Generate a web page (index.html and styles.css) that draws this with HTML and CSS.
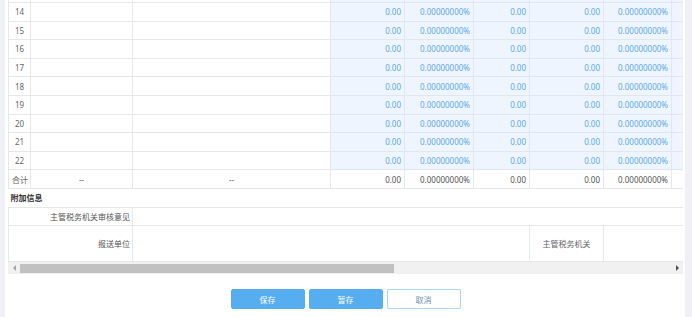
FILE: index.html
```html
<!DOCTYPE html>
<html lang="zh-CN">

<head>
    <meta charset="UTF-8" />
    <meta name="viewport" content="width=device-width, initial-scale=1" />
    <title>申报表</title>
    <link rel="stylesheet" href="styles.css">
</head>

<body>
    <div class="panel">
        <div class="sheetwrap">
            <table class="sheet">
                <colgroup>
                    <col class="w22"><col class="w102"><col class="w198">
                    <col class="w74"><col class="w69"><col class="w56"><col class="w74"><col class="w68">
                    <col class="w74"><col class="w69"><col class="w56"><col class="w74"><col class="w68">
                    <col class="w74"><col class="w97">
                </colgroup>
                <tbody>
                    <!-- fim da linha anterior (rolada para cima) -->
                    <tr class="datarow cut">
                        <td></td><td></td><td></td>
                        <td class="num"></td><td class="num"></td><td class="num"></td><td class="num"></td><td class="num"></td>
                        <td class="num"></td><td class="num"></td><td class="num"></td><td class="num"></td><td class="num"></td>
                        <td class="num"></td><td class="num"></td>
                    </tr>
                    <tr class="datarow">
                        <td class="idx">14</td><td></td><td></td>
                        <td class="num">0.00</td><td class="num">0.00000000%</td><td class="num">0.00</td><td class="num">0.00</td><td class="num">0.00000000%</td>
                        <td class="num">0.00</td><td class="num">0.00000000%</td><td class="num">0.00</td><td class="num">0.00</td><td class="num">0.00000000%</td>
                        <td class="num">0.00</td><td class="num">0.00</td>
                    </tr>
                    <tr class="datarow">
                        <td class="idx">15</td><td></td><td></td>
                        <td class="num">0.00</td><td class="num">0.00000000%</td><td class="num">0.00</td><td class="num">0.00</td><td class="num">0.00000000%</td>
                        <td class="num">0.00</td><td class="num">0.00000000%</td><td class="num">0.00</td><td class="num">0.00</td><td class="num">0.00000000%</td>
                        <td class="num">0.00</td><td class="num">0.00</td>
                    </tr>
                    <tr class="datarow">
                        <td class="idx">16</td><td></td><td></td>
                        <td class="num">0.00</td><td class="num">0.00000000%</td><td class="num">0.00</td><td class="num">0.00</td><td class="num">0.00000000%</td>
                        <td class="num">0.00</td><td class="num">0.00000000%</td><td class="num">0.00</td><td class="num">0.00</td><td class="num">0.00000000%</td>
                        <td class="num">0.00</td><td class="num">0.00</td>
                    </tr>
                    <tr class="datarow">
                        <td class="idx">17</td><td></td><td></td>
                        <td class="num">0.00</td><td class="num">0.00000000%</td><td class="num">0.00</td><td class="num">0.00</td><td class="num">0.00000000%</td>
                        <td class="num">0.00</td><td class="num">0.00000000%</td><td class="num">0.00</td><td class="num">0.00</td><td class="num">0.00000000%</td>
                        <td class="num">0.00</td><td class="num">0.00</td>
                    </tr>
                    <tr class="datarow">
                        <td class="idx">18</td><td></td><td></td>
                        <td class="num">0.00</td><td class="num">0.00000000%</td><td class="num">0.00</td><td class="num">0.00</td><td class="num">0.00000000%</td>
                        <td class="num">0.00</td><td class="num">0.00000000%</td><td class="num">0.00</td><td class="num">0.00</td><td class="num">0.00000000%</td>
                        <td class="num">0.00</td><td class="num">0.00</td>
                    </tr>
                    <tr class="datarow">
                        <td class="idx">19</td><td></td><td></td>
                        <td class="num">0.00</td><td class="num">0.00000000%</td><td class="num">0.00</td><td class="num">0.00</td><td class="num">0.00000000%</td>
                        <td class="num">0.00</td><td class="num">0.00000000%</td><td class="num">0.00</td><td class="num">0.00</td><td class="num">0.00000000%</td>
                        <td class="num">0.00</td><td class="num">0.00</td>
                    </tr>
                    <tr class="datarow">
                        <td class="idx">20</td><td></td><td></td>
                        <td class="num">0.00</td><td class="num">0.00000000%</td><td class="num">0.00</td><td class="num">0.00</td><td class="num">0.00000000%</td>
                        <td class="num">0.00</td><td class="num">0.00000000%</td><td class="num">0.00</td><td class="num">0.00</td><td class="num">0.00000000%</td>
                        <td class="num">0.00</td><td class="num">0.00</td>
                    </tr>
                    <tr class="datarow">
                        <td class="idx">21</td><td></td><td></td>
                        <td class="num">0.00</td><td class="num">0.00000000%</td><td class="num">0.00</td><td class="num">0.00</td><td class="num">0.00000000%</td>
                        <td class="num">0.00</td><td class="num">0.00000000%</td><td class="num">0.00</td><td class="num">0.00</td><td class="num">0.00000000%</td>
                        <td class="num">0.00</td><td class="num">0.00</td>
                    </tr>
                    <tr class="datarow">
                        <td class="idx">22</td><td></td><td></td>
                        <td class="num">0.00</td><td class="num">0.00000000%</td><td class="num">0.00</td><td class="num">0.00</td><td class="num">0.00000000%</td>
                        <td class="num">0.00</td><td class="num">0.00000000%</td><td class="num">0.00</td><td class="num">0.00</td><td class="num">0.00000000%</td>
                        <td class="num">0.00</td><td class="num">0.00</td>
                    </tr>
                    <!-- 合计 -->
                    <tr class="totalrow">
                        <td class="idx">合计</td><td class="mid">--</td><td class="mid">--</td>
                        <td class="num">0.00</td><td class="num">0.00000000%</td><td class="num">0.00</td><td class="num">0.00</td><td class="num">0.00000000%</td>
                        <td class="num">0.00</td><td class="num">0.00000000%</td><td class="num">0.00</td><td class="num">0.00</td><td class="num">0.00000000%</td>
                        <td class="num">0.00</td><td class="num">0.00</td>
                    </tr>
                    <!-- 附加信息 -->
                    <tr class="section">
                        <td colspan="15">附加信息</td>
                    </tr>
                    <tr class="inforow">
                        <td class="lbl" colspan="2">主管税务机关审核意见</td>
                        <td colspan="13"></td>
                    </tr>
                    <tr class="inforow tall">
                        <td class="lbl" colspan="2">报送单位</td>
                        <td colspan="4"></td>
                        <td class="mid">主管税务机关</td>
                        <td colspan="8"></td>
                    </tr>
                </tbody>
            </table>
        </div>

        <!-- barra de rolagem horizontal -->
        <div class="hscroll">
            <span class="arrow left"></span>
            <div class="track"><div class="thumb"></div></div>
            <span class="arrow right"></span>
        </div>

        <div class="actions">
            <button class="btn primary">保存</button>
            <button class="btn primary">暂存</button>
            <button class="btn plain">取消</button>
        </div>
    </div>
</body>

</html>
```

FILE: styles.css
```css
html,
body {
    margin: 0;
    height: 100%;
    overflow: hidden;
}

body {
    background: #eff1f6;
    font-family: "Noto Sans", "Noto Sans CJK SC", sans-serif;
    font-size: 8px;
    color: #555;
}

.panel {
    margin: 0 7px 0 5px;
    padding: 0 2px 0 3px;
    background: #fff;
    height: 100%;
    box-sizing: border-box;
}

/* tabela rolável */
.sheetwrap {
    overflow-x: auto;
    overflow-y: hidden;
    scrollbar-width: none;
}

.sheet {
    width: 1175px;
    table-layout: fixed;
    border-collapse: collapse;
}

.w22 { width: 22px; }
.w56 { width: 56px; }
.w68 { width: 68px; }
.w69 { width: 69px; }
.w74 { width: 74px; }
.w97 { width: 97px; }
.w102 { width: 102px; }
.w198 { width: 198px; }

.sheet td {
    height: 17.6px;
    padding: 0 3px;
    border: 1px solid #e6e8eb;
    white-space: nowrap;
    overflow: hidden;
}

.sheet tr.cut td {
    height: 2px;
    padding: 0;
    border-top: none;
}

.sheet td.idx,
.sheet td.mid {
    text-align: center;
    color: #666;
}

.sheet td.num {
    text-align: right;
}

.datarow td.num {
    background: #eef5fe;
    color: #5ca9e8;
    border-color: #e1e7ee;
}

.totalrow td.num {
    color: #555;
}

.section td {
    padding-left: 2px;
    border-left: none;
    border-right: none;
    font-weight: bold;
    color: #333;
}

.inforow td.lbl {
    text-align: right;
    padding-right: 2px;
    color: #555;
}

.inforow.tall td {
    height: 35px;
}

/* barra de rolagem */
.hscroll {
    display: flex;
    height: 12px;
    background: #f1f1f1;
}

.hscroll .track {
    flex: 1;
    padding-top: 2px;
}

.hscroll .thumb {
    width: 374px;
    height: 9px;
    background: #c1c1c1;
}

.hscroll .arrow {
    flex: 0 0 12px;
    display: flex;
    align-items: center;
    justify-content: center;
}

.hscroll .arrow::before {
    content: "";
    border-top: 3px solid transparent;
    border-bottom: 3px solid transparent;
}

.hscroll .arrow.left::before {
    border-right: 3px solid #a3a3a3;
}

.hscroll .arrow.right::before {
    border-left: 3px solid #505050;
}

/* botões */
.actions {
    display: flex;
    justify-content: center;
    gap: 4px;
    margin-top: 15px;
}

.btn {
    width: 74px;
    height: 20px;
    padding: 0;
    border-radius: 2px;
    font-family: "Noto Sans CJK SC", sans-serif;
    font-size: 8px;
    cursor: pointer;
}

.btn.primary {
    background: #56adf0;
    border: 1px solid #56adf0;
    color: #fff;
}

.btn.plain {
    background: #fff;
    border: 1px solid #a8d2f6;
    color: #6b8fb3;
}
```
